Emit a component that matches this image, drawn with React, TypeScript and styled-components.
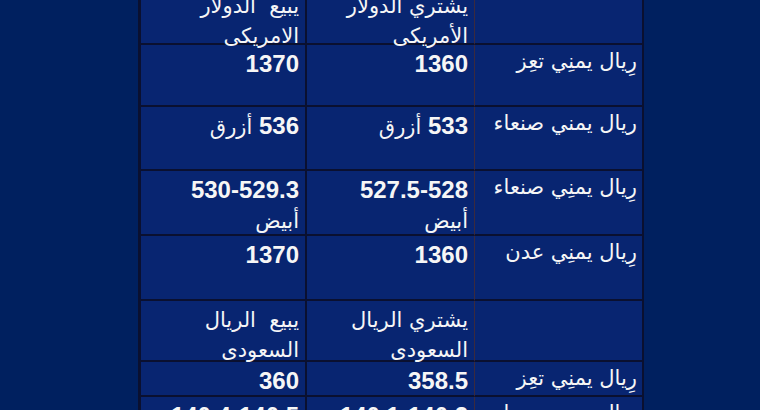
import React from "react";
import styled, { createGlobalStyle } from "styled-components";

const Global = createGlobalStyle`
  html, body {
    margin: 0;
    padding: 0;
    background: #00205f;
    overflow: hidden;
  }
  body {
    width: 760px;
    height: 410px;
    font-family: "Liberation Sans", "DejaVu Sans", Arial, sans-serif;
  }
`;

const Page = styled.div`
  width: 760px;
  height: 410px;
  background: #00205f;
  overflow: hidden;
  padding-left: 138px;
  box-sizing: border-box;
`;

const Table = styled.div`
  margin-top: -13px;
  display: grid;
  direction: rtl;
  width: 506px;
  box-sizing: border-box;
  grid-template-columns: 168px 169px 164px;
  grid-template-rows: 58px 62px 64px 65px 65px 61px 35px 60px;
  border-right: 2px solid #0a1030;
  border-left: 3px solid #0a1030;
  background: #082571;
`;

const Cell = styled.div<{ $col: number }>`
  box-sizing: border-box;
  min-height: 0;
  border-bottom: 2px solid #0a1030;
  border-left: ${(p) =>
    p.$col === 0 ? "1px solid #3b2a3e" : p.$col === 1 ? "2px solid #0a1030" : "none"};
  padding: ${(p) => (p.$col === 0 ? "2px 5px 0 5px" : "5px 6px 0 6px")};
  color: #f6f6f6;
  text-align: right;
  font-size: 16px;
  line-height: 28px;
  overflow: visible;
`;

const Num = styled.span`
  font-family: "Liberation Sans", Arial, sans-serif;
  font-weight: 700;
  font-size: 24px;
  unicode-bidi: isolate;
  direction: ltr;
`;

const Ar = styled.span`
  font-family: "DejaVu Sans", "Liberation Sans", sans-serif;
  font-size: 21px;
`;

const Line = styled.div`
  white-space: pre;
`;

type Row = {
  label?: string;
  buy: React.ReactNode;
  sell: React.ReactNode;
};

const header = (a: string, b: string) => (
  <>
    <Line>
      <Ar>{a}</Ar>
    </Line>
    <Line>
      <Ar>{b}</Ar>
    </Line>
  </>
);

const numAr = (n: string, w?: string, wrap?: boolean) =>
  wrap ? (
    <>
      <Line>
        <Num>{n}</Num>
      </Line>
      <Line>
        <Ar>{w}</Ar>
      </Line>
    </>
  ) : (
    <Line>
      <Num>{n}</Num>
      {w ? <Ar> {w}</Ar> : null}
    </Line>
  );

const rows: Row[] = [
  {
    buy: header("يشتري الدولار", "الأمريكى"),
    sell: header("يبيع  الدولار", "الامريكى"),
  },
  { label: "رِيال يمنِي تعِز", buy: numAr("1360"), sell: numAr("1370") },
  { label: "ريال يمني صنعاء", buy: numAr("533", "أزرق"), sell: numAr("536", "أزرق") },
  {
    label: "رِيال يمنِي صنعاء",
    buy: numAr("527.5-528", "أبيض", true),
    sell: numAr("530-529.3", "أبيض", true),
  },
  { label: "رِيال يمنِي عدن", buy: numAr("1360"), sell: numAr("1370") },
  {
    buy: header("يشتري الريال", "السعودى"),
    sell: header("يبيع  الريال", "السعودى"),
  },
  { label: "رِيال يمنِي تعِز", buy: numAr("358.5"), sell: numAr("360") },
  { label: "رِيال يمنِي صنعاء", buy: numAr("140.1-140.2"), sell: numAr("140.4-140.5") },
];

export default function App() {
  return (
    <>
      <Global />
      <Page>
        <Table>
          {rows.map((r, i) => (
            <React.Fragment key={i}>
              <Cell $col={0}>
                {r.label ? (
                  <Line>
                    <Ar>{r.label}</Ar>
                  </Line>
                ) : null}
              </Cell>
              <Cell $col={1}>{r.buy}</Cell>
              <Cell $col={2}>{r.sell}</Cell>
            </React.Fragment>
          ))}
        </Table>
      </Page>
    </>
  );
}
